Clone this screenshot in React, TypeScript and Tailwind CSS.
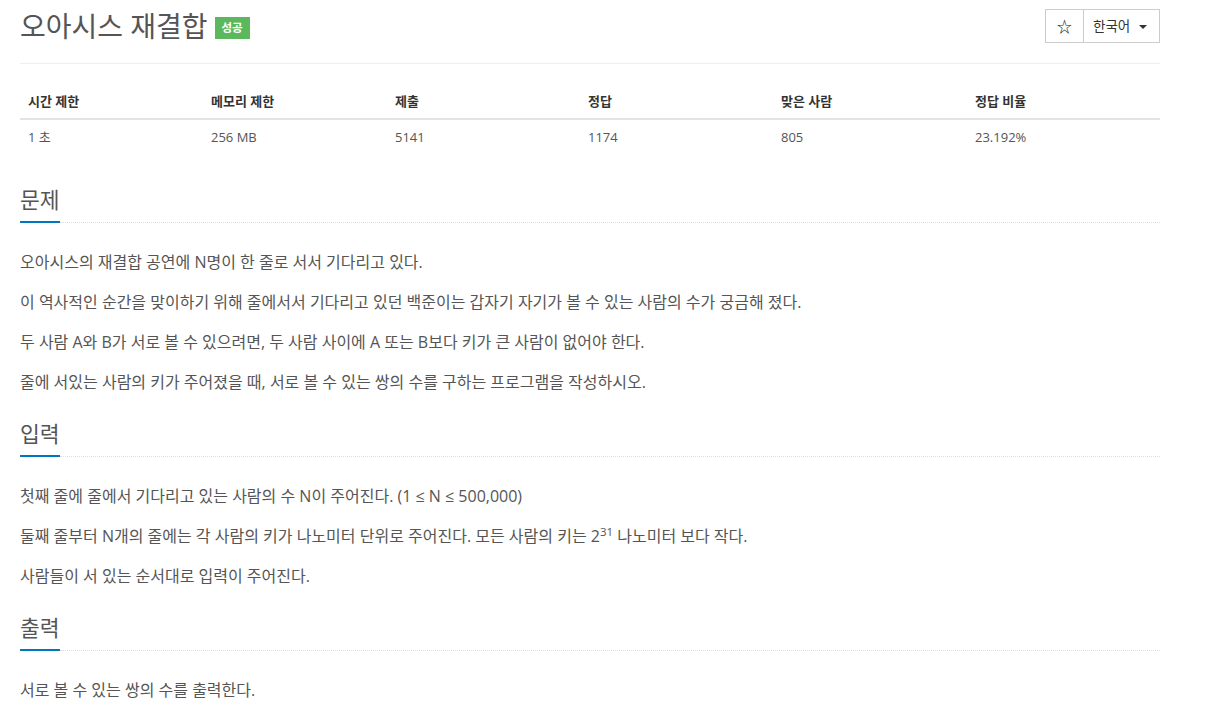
import React from "react";

const font = { fontFamily: '"Open Sans", "Noto Sans CJK KR", sans-serif' };

function Section({ title, children }: { title: string; children: React.ReactNode }) {
  return (
    <section className="mt-[28px]">
      <h2 className="text-[21.5px] leading-[28px] text-[#555] font-normal">{title}</h2>
      <div className="flex items-end mt-[7px]">
        <div className="w-10 h-[2px] bg-[#0076c0]" />
        <div className="flex-1 border-b border-dotted border-[#ddd]" />
      </div>
      <div className="mt-[29px] text-[16px] leading-[20px] text-[#555] flex flex-col gap-5">{children}</div>
    </section>
  );
}

export default function App() {
  const heads = ["시간 제한", "메모리 제한", "제출", "정답", "맞은 사람", "정답 비율"];
  const vals = ["1 초", "256 MB", "5141", "1174", "805", "23.192%"];
  return (
    <div className="bg-white min-h-[727px] pl-5 pt-[9px]" style={font}>
      <div className="w-[1140px]">
        <div className="flex justify-between items-start h-[55px] border-b border-[#eee]">
          <div className="flex items-center gap-[7px]">
            <h1 className="text-[28px] leading-[34px] text-[#555] font-normal">오아시스 재결합</h1>
            <span className="mt-[3px] inline-flex items-center justify-center w-[35px] h-[22px] bg-[#5cb85c] text-white text-[11.5px] font-bold">성공</span>
          </div>
          <div className="flex h-[34px] border border-[#ccc] text-[#333] text-[13.5px]">
            <div className="w-[38px] flex items-center justify-center border-r border-[#ccc] text-[15px] text-[#222]">☆</div>
            <div className="w-[75px] flex items-center pl-[9px] gap-[9px]">
              <span>한국어</span>
              <span className="w-0 h-0 border-l-4 border-r-4 border-t-4 border-l-transparent border-r-transparent border-t-[#333] mt-[1px]" />
            </div>
          </div>
        </div>
        <div className="mt-5 grid grid-cols-[183px_184px_193px_193px_194px_193px] text-[13px]">
          {heads.map((h) => (
            <div key={h} className="px-2 py-2 leading-[18px] font-bold text-[#333] border-b-2 border-[#e3e3e3]">{h}</div>
          ))}
          {vals.map((v) => (
            <div key={v} className="px-2 py-2 leading-[18px] text-[13px] text-[#555] border-b border-[#fff]">{v}</div>
          ))}
        </div>
        <div className="pt-[3px]">
          <Section title="문제">
            <p>오아시스의 재결합 공연에 N명이 한 줄로 서서 기다리고 있다.</p>
            <p>이 역사적인 순간을 맞이하기 위해 줄에서서 기다리고 있던 백준이는 갑자기 자기가 볼 수 있는 사람의 수가 궁금해 졌다.</p>
            <p>두 사람 A와 B가 서로 볼 수 있으려면, 두 사람 사이에 A 또는 B보다 키가 큰 사람이 없어야 한다.</p>
            <p>줄에 서있는 사람의 키가 주어졌을 때, 서로 볼 수 있는 쌍의 수를 구하는 프로그램을 작성하시오.</p>
          </Section>
          <Section title="입력">
            <p>첫째 줄에 줄에서 기다리고 있는 사람의 수 N이 주어진다. (1 ≤ N ≤ 500,000)</p>
            <p>
              둘째 줄부터 N개의 줄에는 각 사람의 키가 나노미터 단위로 주어진다. 모든 사람의 키는 2
              <sup className="text-[11.5px]">31</sup> 나노미터 보다 작다.
            </p>
            <p>사람들이 서 있는 순서대로 입력이 주어진다.</p>
          </Section>
          <Section title="출력">
            <p>서로 볼 수 있는 쌍의 수를 출력한다.</p>
          </Section>
        </div>
      </div>
    </div>
  );
}
